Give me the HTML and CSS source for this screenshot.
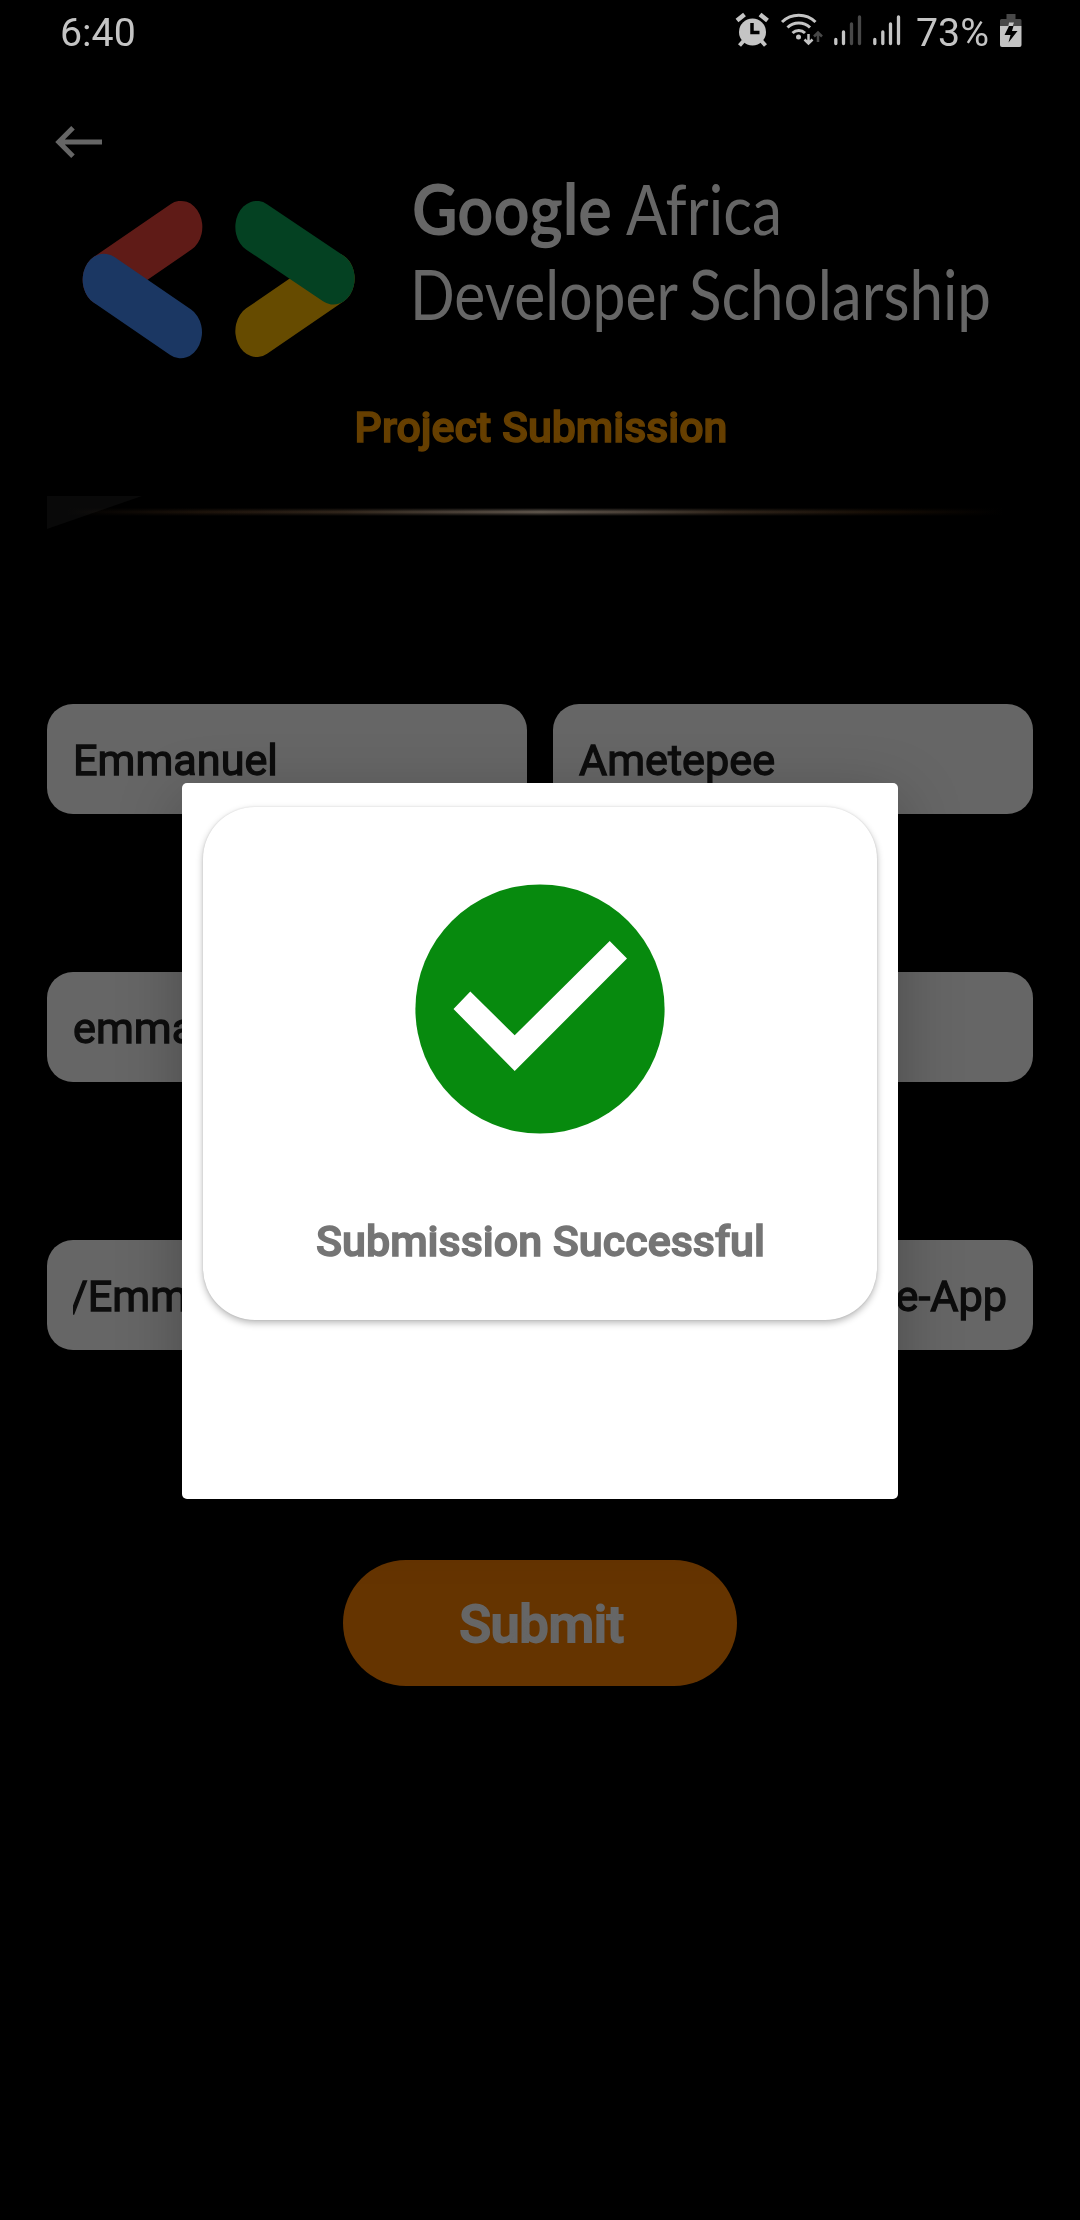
FILE: index.html
```html
<!DOCTYPE html>
<html lang="en">
<head>
<meta charset="utf-8">
<title>Project Submission</title>
<link rel="stylesheet" href="styles.css">
</head>
<body>
<main class="screen">
  <header class="status">
    <span class="clock">6:40</span>
    <svg class="status-icons" width="180" height="64" viewBox="0 0 180 64">
      <g fill="#c4c4c4" stroke="none">
        <circle cx="18" cy="32" r="13.5"/>
        <path d="M2.500 20.500 10 14.500M25.500 14.500 33 20.500" stroke="#c4c4c4" stroke-width="4.500"/>
        <path d="M9 41 5 45.500M27 41 31 45.500" stroke="#c4c4c4" stroke-width="4"/>
        <path d="M17.500 23v9.500h7.500" fill="none" stroke="#000" stroke-width="3.500"/>
      </g>
      <g fill="none" stroke="#c4c4c4" stroke-width="3">
        <path d="M47.500 22a24 24 0 0 1 33.500 0M53 27.500a16 16 0 0 1 22.500 0M58 33a9 9 0 0 1 12.500 0"/>
        <path d="M74 34v9M70 39.500l4 4 4-4" stroke-width="2.500"/>
        <path d="M83.500 42v-9M79.500 36.500l4-4 4 4" stroke="#484848" stroke-width="2.500"/>
      </g>
      <circle cx="64" cy="37" r="2.500" fill="#c4c4c4"/>
      <g stroke="#c4c4c4" stroke-width="3.300" stroke-linecap="round">
        <path d="M101.300 39.500v4M109 32v11.500M140.300 39.500v4M148.300 32v11.500M156 24v19.500M164 17v26.500"/>
        <path d="M117 24v19.500M125 17v26.500" stroke="#484848"/>
      </g>
    </svg>
    <span class="percent">73%</span>
    <svg class="battery" width="22" height="34" viewBox="0 0 22 34">
      <path d="M6.500 0h9v5H20a1.500 1.500 0 0 1 1.500 1.500V12H0V6.500A1.500 1.500 0 0 1 1.500 5h5z" fill="#484848"/>
      <path d="M0 12h21.500v19a2 2 0 0 1-2 2H2a2 2 0 0 1-2-2z" fill="#c4c4c4"/>
      <path d="M9 8.500h5L12 14h-4z" fill="#c4c4c4"/>
      <path d="M9 12h4.500L12 17h5.500L8.500 28.500 10.500 21H4.500z" fill="#000"/>
    </svg>
  </header>

  <nav class="toolbar">
    <svg width="48" height="32" viewBox="0 0 48 32" fill="none" stroke="#666" stroke-width="5">
      <path d="M47 16H4M18 1.800 3.800 16 18 30.200"/>
    </svg>
  </nav>

  <svg class="brand" width="1080" height="180" viewBox="0 190 1080 180">
    <g transform="scale(.33333 .40667)" fill="none" stroke-width="128" stroke-linecap="round">
      <path d="M543 558 312 688" stroke="#5f1b17"/>
      <path d="M312 688 542 817" stroke="#1b3763"/>
      <path d="M770 814 1000 685" stroke="#664b00"/>
      <path d="M770 558 1000 685" stroke="#044122"/>
    </g>
    <g class="brand-text" fill="#666">
      <text x="412" y="235" textLength="200" lengthAdjust="spacingAndGlyphs" class="strong">Google</text>
      <text x="626" y="235" textLength="156" lengthAdjust="spacingAndGlyphs">Africa</text>
      <text x="410" y="320" textLength="268" lengthAdjust="spacingAndGlyphs">Developer</text>
      <text x="689" y="320" textLength="302" lengthAdjust="spacingAndGlyphs">Scholarship</text>
    </g>
  </svg>

  <h1 class="title">Project Submission</h1>

  <div class="divider"><i class="corner"></i><i class="glow"></i></div>

  <form class="form">
    <div class="row">
      <div class="field">Emmanuel</div>
      <div class="field">Ametepee</div>
    </div>
    <div class="row"><div class="field">emmanuel</div></div>
    <div class="row"><div class="field"><div class="link"><span>/Emmanuel</span><span>e-App</span></div></div></div>
    <div class="submit">Submit</div>
  </form>

  <section class="dialog">
    <div class="card">
      <svg width="250" height="250" viewBox="0 0 250 250">
        <circle cx="125" cy="125" r="124.600" fill="#078a0e"/>
        <path d="M38.500 125 55.300 107.500 99.700 151.300 194.700 57 212 74.500 99.700 187z" fill="#fff"/>
      </svg>
      <p class="message">Submission Successful</p>
    </div>
  </section>
</main>
</body>
</html>
```
FILE: styles.css
```css
* { box-sizing: border-box; }
body { margin: 0; background: #000; font-family: Roboto, sans-serif; }
.screen {
  position: relative;
  width: 1080px;
  height: 2220px;
  overflow: hidden;
  background: #000;
}
.status {
  display: flex;
  height: 64px;
  padding: 0 58px 0 60px;
  color: #c4c4c4;
  font-size: 39.3px;
  line-height: 66px;
}
.clock { width: 673px; }
.status-icons { width: 183px; flex: none; }
.percent { width: 84px; flex: none; }
.battery { flex: none; margin-top: 14px; }
.toolbar { height: 126px; padding: 62px 0 0 55px; }
.brand { display: block; overflow: visible; }
.brand-text { font-family: Lato, sans-serif; font-size: 70px; }
.brand-text .strong { font-weight: 700; }
.title {
  margin: 32px 0 0;
  padding-left: 2px;
  height: 50px;
  color: #663f00;
  font-size: 42.9px;
  font-weight: 500;
  line-height: 50px;
  text-align: center;
  -webkit-text-stroke: 1.4px #663f00;
}
.divider {
  display: grid;
  width: 986px;
  height: 33px;
  margin: 44px 0 0 47px;
}
.corner, .glow { grid-area: 1 / 1; }
.corner {
  width: 95px;
  height: 33px;
  background: #090909;
  clip-path: polygon(0 0, 100% 0, 0 100%);
}
.glow {
  height: 8px;
  margin-top: 12px;
  background:
    linear-gradient(#000, transparent 45%, transparent 55%, #000),
    linear-gradient(90deg, transparent 2%, #1c120a 16%, #30251b 30%, #4b4138 42%, #5d544b 50%, #4b4138 59%, #30251b 69%, #160d05 84%, transparent 97%);
  mix-blend-mode: screen;
}
.form {
  display: flex;
  flex-direction: column;
  align-items: center;
  gap: 158px;
  padding: 175px 47px 0;
}
.row { display: flex; gap: 26px; width: 100%; }
.field {
  flex: 1;
  height: 110px;
  padding: 0 26px;
  border-radius: 26px;
  background: #666;
  color: #0d0d0d;
  font-size: 43.2px;
  line-height: 114px;
  -webkit-text-stroke: 1.3px #0d0d0d;
}
.link { display: flex; justify-content: space-between; overflow: hidden; }
.link span:first-child { margin-left: -3px; }
.submit {
  width: 394px;
  height: 126px;
  margin-top: 52px;
  padding-left: 3px;
  border-radius: 63px;
  background: #653400;
  color: #666;
  font-size: 52.5px;
  font-weight: 500;
  letter-spacing: -.4px;
  line-height: 128px;
  text-align: center;
  -webkit-text-stroke: 1.8px #666;
}
.dialog {
  position: absolute;
  left: 182px;
  top: 783px;
  width: 716px;
  height: 716px;
  padding: 24px 21px;
  border-radius: 5px;
  background: #fff;
  box-shadow: 0 18px 64px rgba(0, 0, 0, .28);
}
.card {
  display: flex;
  flex-direction: column;
  align-items: center;
  height: 513px;
  padding-top: 77px;
  border-radius: 52px;
  box-shadow: 0 3px 7px rgba(0, 0, 0, .28), 0 0 2px rgba(0, 0, 0, .12);
}
.message {
  margin: 82px 0 0 1px;
  color: #757575;
  font-size: 43px;
  font-weight: 500;
  line-height: 50px;
  -webkit-text-stroke: 1.4px #757575;
}
```
